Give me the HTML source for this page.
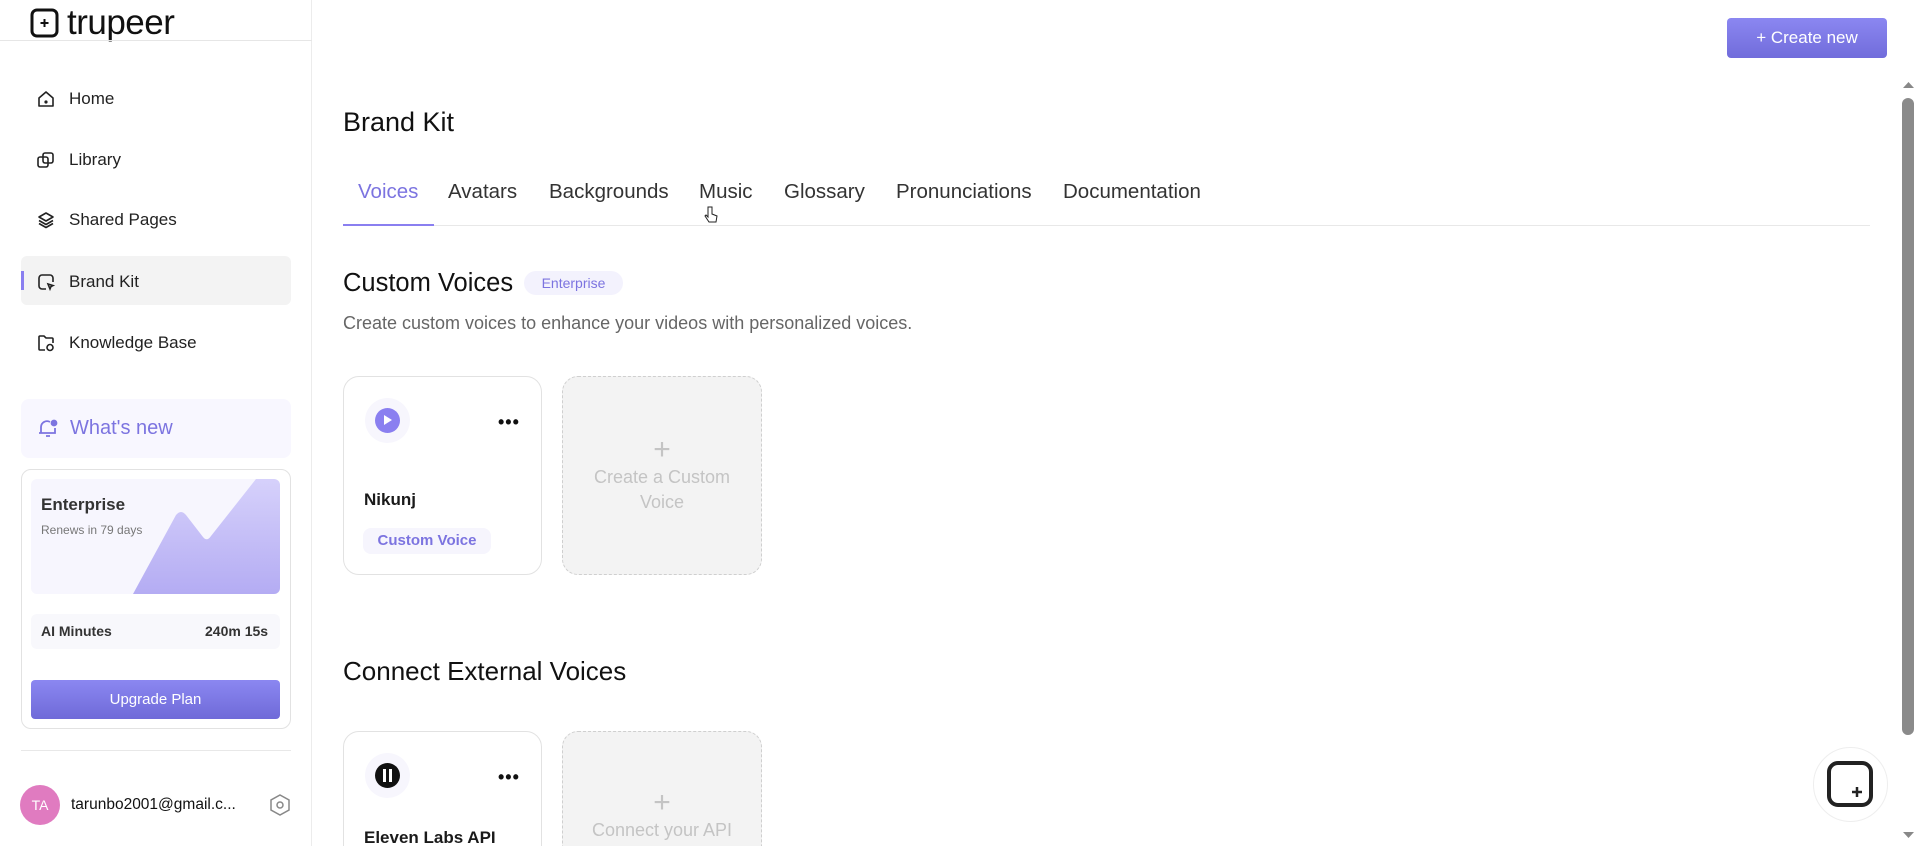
<!DOCTYPE html>
<html><head><meta charset="utf-8"><style>
*{margin:0;padding:0;box-sizing:border-box}
html{width:1920px;height:846px;overflow:hidden}
body{width:1920px;height:846px;overflow:hidden;background:#fff;font-family:"Liberation Sans",sans-serif;color:#1a1a1a;position:relative}
.abs{position:absolute}
.sb{position:absolute;left:0;top:0;width:312px;height:846px;border-right:1px solid #ececec;background:#fff}
.nav{position:absolute;left:36px;font-size:17px;color:#222;display:flex;align-items:center;gap:13px}
.nav svg{width:20px;height:20px}
.tab{position:absolute;top:180px;font-size:20.5px;color:#333}
.card{position:absolute;width:199px;height:199px;border:1px solid #e2e2e2;border-radius:16px;background:#fff}
.dash{position:absolute;width:200px;height:199px;border:1.5px dashed #cfcfcf;border-radius:16px;background:#f3f3f3;color:#c4c4c4;text-align:center;font-size:18px;line-height:25px}
.dots{position:absolute;left:154px;top:35px;font-size:18px;font-weight:bold;letter-spacing:1px;color:#111}
</style></head><body>
<div class="sb">
 <svg class="abs" style="left:30px;top:8px" width="29" height="30" viewBox="0 0 29 30"><rect x="2" y="2" width="25" height="26" rx="5" fill="none" stroke="#111" stroke-width="3"/><path d="M14.5 11v8M10.5 15h8" stroke="#111" stroke-width="2"/></svg>
 <div class="abs" style="left:67px;top:3px;font-size:35px;color:#111;letter-spacing:-0.5px">trupeer</div>
 <div class="abs" style="left:0;top:40px;width:312px;height:1px;background:#e6e6e6"></div>
 <div class="nav" style="top:89px"><svg viewBox="0 0 20 20" fill="none" stroke="#222" stroke-width="1.6"><path d="M3 9l7-6 7 6v8H3z" stroke-linejoin="round"/><circle cx="10" cy="13" r=".8" fill="#222"/></svg>Home</div>
 <div class="nav" style="top:150px"><svg viewBox="0 0 20 20" fill="none" stroke="#222" stroke-width="1.6"><rect x="2" y="7" width="10" height="10" rx="2"/><rect x="7" y="3" width="10" height="10" rx="2"/></svg>Library</div>
 <div class="nav" style="top:210px"><svg viewBox="0 0 20 20" fill="none" stroke="#222" stroke-width="1.6"><path d="M10 3l7 4-7 4-7-4z M3 10.5l7 4 7-4 M3 13.5l7 4 7-4" stroke-linejoin="round"/></svg>Shared Pages</div>
 <div class="abs" style="left:21px;top:256px;width:270px;height:49px;background:#f3f3f3;border-radius:6px"></div>
 <div class="abs" style="left:21px;top:271px;width:3px;height:19px;background:#8a7ff0"></div>
 <div class="nav" style="top:272px"><svg viewBox="0 0 20 20" fill="none" stroke="#222" stroke-width="1.6"><path d="M10 17H6a3 3 0 01-3-3V6a3 3 0 013-3h8a3 3 0 013 3v4"/><path d="M12 12l5 1.5-2 1-1 2.5z"/></svg>Brand Kit</div>
 <div class="nav" style="top:333px"><svg viewBox="0 0 20 20" fill="none" stroke="#222" stroke-width="1.6"><path d="M9 17H4a1 1 0 01-1-1V4a1 1 0 011-1h4l2 2h6a1 1 0 011 1v4"/><circle cx="14" cy="14.5" r="3"/></svg>Knowledge Base</div>
 <div class="abs" style="left:21px;top:399px;width:270px;height:59px;background:#f8f7ff;border-radius:8px"></div>
 <svg class="abs" style="left:36px;top:416px" width="24" height="24" viewBox="0 0 24 24" fill="none" stroke="#7c74e0" stroke-width="1.8"><path d="M5 17V11a6 6 0 019-5M19 12v5H3M10 20h4"/><circle cx="18" cy="7" r="2.5" fill="#7c74e0"/></svg>
 <div class="abs" style="left:70px;top:417px;font-size:20px;color:#7c74e0">What's new</div>
 <div class="abs" style="left:21px;top:469px;width:270px;height:260px;border:1px solid #e2e2e2;border-radius:10px"></div>
 <div class="abs" style="left:31px;top:479px;width:249px;height:115px;background:#f7f6fe;border-radius:6px;overflow:hidden">
  <svg width="249" height="115" style="position:absolute;left:0;top:0"><defs><linearGradient id="g" x1="0" y1="0" x2="0" y2="1"><stop offset="0" stop-color="#d6d1fb"/><stop offset="1" stop-color="#b4acf3"/></linearGradient></defs><path d="M102 115L145 36Q150 30 155 36L172 58Q176 63 180 57L225 0H249V115Z" fill="url(#g)"/></svg>
  <div class="abs" style="left:10px;top:16px;font-size:17px;font-weight:bold;color:#333">Enterprise</div>
  <div class="abs" style="left:10px;top:44px;font-size:12px;color:#777">Renews in 79 days</div>
 </div>
 <div class="abs" style="left:31px;top:614px;width:249px;height:35px;background:#f8f8fc;border-radius:6px"></div>
 <div class="abs" style="left:41px;top:623px;font-size:14px;font-weight:bold;color:#333">AI Minutes</div>
 <div class="abs" style="left:205px;top:623px;font-size:14px;font-weight:bold;color:#333">240m 15s</div>
 <div class="abs" style="left:31px;top:680px;width:249px;height:39px;background:linear-gradient(#8b87f1,#6f6ad8);border-radius:4px;color:#fff;font-size:15px;text-align:center;line-height:39px">Upgrade Plan</div>
 <div class="abs" style="left:21px;top:750px;width:270px;height:1px;background:#e8e8e8"></div>
 <div class="abs" style="left:20px;top:785px;width:40px;height:40px;border-radius:50%;background:#e07bc0;color:#fff;font-size:14px;text-align:center;line-height:40px">TA</div>
 <div class="abs" style="left:71px;top:796px;font-size:15.5px;color:#111">tarunbo2001@gmail.c...</div>
 <svg class="abs" style="left:268px;top:793px" width="24" height="24" viewBox="0 0 24 24" fill="none" stroke="#888" stroke-width="1.5"><path d="M12 2l9 5v10l-9 5-9-5V7z"/><circle cx="12" cy="12" r="3"/></svg>
</div>

<div class="abs" style="left:1727px;top:18px;width:160px;height:40px;background:linear-gradient(#8b87f1,#716cdb);border-radius:4px;color:#fff;font-size:17px;text-align:center;line-height:40px">+ Create new</div>
<div class="abs" style="left:343px;top:107px;font-size:27px;color:#111">Brand Kit</div>
<div class="tab" style="left:358px;color:#7c74e0">Voices</div>
<div class="tab" style="left:448px">Avatars</div>
<div class="tab" style="left:549px">Backgrounds</div>
<div class="tab" style="left:699px">Music</div>
<div class="tab" style="left:784px">Glossary</div>
<div class="tab" style="left:896px">Pronunciations</div>
<div class="tab" style="left:1063px">Documentation</div>
<div class="abs" style="left:343px;top:225px;width:1527px;height:1px;background:#e8e8e8"></div>
<div class="abs" style="left:343px;top:224px;width:91px;height:2px;background:#8a7ff0"></div>
<svg class="abs" style="left:704px;top:206px" width="14" height="18" viewBox="0 0 14 18"><path d="M4 1v10l-2-2-1 1 4 6h7l1-6-5-2V1z" fill="#fff" stroke="#222" stroke-width="1"/></svg>
<div class="abs" style="left:343px;top:269px;font-size:25.5px;color:#111">Custom Voices</div>
<div class="abs" style="left:524px;top:271px;width:99px;height:24px;background:#f3f2fd;border-radius:12px;color:#7c74e0;font-size:14px;text-align:center;line-height:24px">Enterprise</div>
<div class="abs" style="left:343px;top:313px;font-size:18px;color:#666">Create custom voices to enhance your videos with personalized voices.</div>

<div class="card" style="left:343px;top:376px">
 <div class="abs" style="left:21px;top:21px;width:45px;height:45px;border-radius:50%;background:#f7f6fd"></div>
 <div class="abs" style="left:31px;top:31px;width:25px;height:25px;border-radius:50%;background:#8a7ff0"></div>
 <svg class="abs" style="left:39px;top:37px" width="10" height="12"><path d="M1 1L9 6L1 11Z" fill="#fff"/></svg>
 <div class="dots">•••</div>
 <div class="abs" style="left:20px;top:113px;font-size:17px;font-weight:bold">Nikunj</div>
 <div class="abs" style="left:19px;top:151px;width:128px;height:26px;background:#f6f5fd;border-radius:8px;color:#7c74e0;font-size:15px;font-weight:bold;text-align:center;line-height:26px">Custom Voice</div>
</div>
<div class="dash" style="left:562px;top:376px;padding-top:58px"><div style="font-size:30px;line-height:30px">+</div>Create a Custom<br>Voice</div>

<div class="abs" style="left:343px;top:656px;font-size:26px;color:#111">Connect External Voices</div>
<div class="card" style="left:343px;top:731px;height:140px">
 <div class="abs" style="left:21px;top:21px;width:45px;height:45px;border-radius:50%;background:#f7f6fd"></div>
 <div class="abs" style="left:31px;top:31px;width:25px;height:25px;border-radius:50%;background:#111"></div>
 <div class="abs" style="left:39px;top:37px;width:3px;height:13px;background:#fff"></div>
 <div class="abs" style="left:45px;top:37px;width:3px;height:13px;background:#fff"></div>
 <div class="dots">•••</div>
 <div class="abs" style="left:20px;top:96px;font-size:17px;font-weight:bold">Eleven Labs API</div>
</div>
<div class="dash" style="left:562px;top:731px;height:140px;padding-top:56px"><div style="font-size:30px;line-height:30px">+</div>Connect your API</div>

<div class="abs" style="left:1813px;top:747px;width:75px;height:75px;border-radius:50%;background:#fff;border:1px solid #eee"></div>
<svg class="abs" style="left:1826px;top:760px" width="48" height="48" viewBox="0 0 48 48"><rect x="3" y="3" width="42" height="42" rx="9" fill="none" stroke="#222" stroke-width="4"/><path d="M31 27v10M26 32h10" stroke="#222" stroke-width="2.5"/></svg>
<div class="abs" style="left:1902px;top:98px;width:12px;height:637px;background:#8a8a8a;border-radius:6px"></div>
<svg class="abs" style="left:1902px;top:80px" width="13" height="10"><path d="M1 8L6.5 2L12 8Z" fill="#888"/></svg>
<svg class="abs" style="left:1902px;top:830px" width="13" height="10"><path d="M1 2L6.5 8L12 2Z" fill="#888"/></svg>
</body></html>
